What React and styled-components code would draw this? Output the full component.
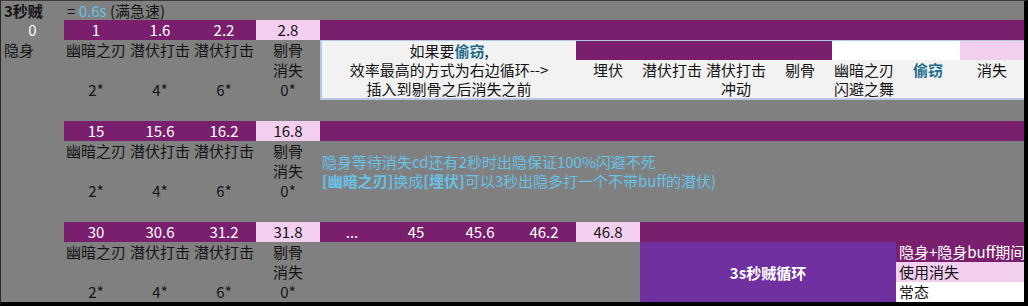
import React from "react";
import styled, { createGlobalStyle } from "styled-components";

const PURPLE = "#7a1f6e";
const PINK = "#f2ceef";
const VIOLET = "#7030a0";
const HINT = "#66c3ea";
const TEAL = "#1f6f8b";
const INK = "#141414";
const EDGE = "#b4c7e7";

const SKILLS = ["幽暗之刃", "潜伏打击", "潜伏打击", "剔骨"];
const STACKS = ["2*", "4*", "6*", "0*"];

const BLOCKS = [
  { row: 2, times: ["1", "1.6", "2.2", "2.8"], pink: [3] },
  { row: 7, times: ["15", "15.6", "16.2", "16.8"], pink: [3] },
  {
    row: 12,
    times: ["30", "30.6", "31.2", "31.8", "...", "45", "45.6", "46.2", "46.8"],
    pink: [3, 8],
  },
];

const GlobalStyle = createGlobalStyle`
  html, body {
    margin: 0;
    padding: 0;
    background: #808080;
  }
  body {
    font-family: "Noto Sans CJK SC", "Liberation Sans", sans-serif;
  }
`;

const Sheet = styled.div`
  width: 1028px;
  height: 306px;
  box-sizing: border-box;
  display: grid;
  grid-template-columns: 63px repeat(15, 64px);
  grid-template-rows: 19px repeat(4, 20px) 21px repeat(4, 20px) 21px repeat(4, 20px);
  border-top: 1px solid #3c3c3c;
  border-left: 1px solid #2a2a2a;
  border-right: 4px solid #000;
  border-bottom: 4px solid #000;
  background: #808080;
  font-size: 15px;
  color: ${INK};
  overflow: hidden;
`;

const Cell = styled.div`
  grid-column: ${(p) => p.$c} / span ${(p) => p.$w || 1};
  grid-row: ${(p) => p.$r} / span ${(p) => p.$h || 1};
  display: flex;
  align-items: center;
  justify-content: ${(p) => (p.$left ? "flex-start" : "center")};
  padding-left: ${(p) => (p.$left ? "3px" : "0")};
  line-height: 20px;
  white-space: nowrap;
  min-width: 0;
  color: ${(p) => p.$color || "inherit"};
`;

const Title = styled(Cell)`
  font-weight: 700;
`;

const Band = styled(Cell)`
  background: ${(p) => (p.$pink ? PINK : PURPLE)};
  color: ${(p) => (p.$pink ? INK : "#fff")};
`;

const Blue = styled.span`
  color: ${HINT};
  font-weight: ${(p) => (p.$bold ? 700 : 400)};
`;

const NoteBox = styled.div`
  grid-column: 6 / span 11;
  grid-row: 3 / span 3;
  display: grid;
  grid-template-columns: 254px repeat(7, 64px);
  grid-template-rows: 19px 20px 18px;
  background: #f2f2f2;
  border-top: 1px solid ${EDGE};
  border-left: 2px solid ${EDGE};
  border-bottom: 2px solid ${EDGE};
`;

const NoteText = styled.div`
  grid-column: 1;
  grid-row: 1 / span 3;
  display: flex;
  flex-direction: column;
  align-items: center;
  line-height: 19px;
  white-space: nowrap;
`;

const Key = styled.b`
  color: ${TEAL};
`;

const Swatch = styled.div`
  grid-column: ${(p) => p.$c} / span ${(p) => p.$w};
  grid-row: 1;
  background: ${(p) => p.$bg};
`;

const Hint = styled.div`
  grid-column: 6 / span 11;
  grid-row: 8 / span 3;
  padding: 11px 0 0 2px;
  line-height: 19px;
  color: ${HINT};
  white-space: nowrap;
`;

const Loop = styled.div`
  grid-column: 11 / span 4;
  grid-row: 13 / span 3;
  display: flex;
  align-items: center;
  justify-content: center;
  background: ${VIOLET};
  color: #fff;
  font-weight: 700;
`;

const Legend = styled(Cell)`
  background: ${(p) => ({ purple: PURPLE, pink: PINK, white: "#fff" })[p.$tone]};
  color: ${(p) => (p.$tone === "purple" ? "#fff" : INK)};
`;

const Block = ({ row, times, pink }) => (
  <>
    {times.map((t, i) => (
      <Band key={`t${i}`} $c={2 + i} $r={row} $pink={pink.includes(i)}>
        {t}
      </Band>
    ))}
    <Band $c={2 + times.length} $w={15 - times.length} $r={row} />
    {SKILLS.map((s, i) => (
      <Cell key={`s${i}`} $c={2 + i} $r={row + 1}>
        {s}
      </Cell>
    ))}
    <Cell $c={5} $r={row + 2}>
      消失
    </Cell>
    {STACKS.map((s, i) => (
      <Cell key={`k${i}`} $c={2 + i} $r={row + 3}>
        {s}
      </Cell>
    ))}
  </>
);

const App = () => {
  return (
    <>
      <GlobalStyle />
      <Sheet>
        <Title $c={1} $r={1} $left>
          3秒贼
        </Title>
        <Cell $c={2} $r={1} $w={4} $left>
          = <Blue>&nbsp;0.6s</Blue>&nbsp;(满急速)
        </Cell>
        <Cell $c={1} $r={2} $color="#fff">
          0
        </Cell>
        <Cell $c={1} $r={3} $left>
          隐身
        </Cell>

        {BLOCKS.map((b) => (
          <Block key={b.row} {...b} />
        ))}

        <NoteBox>
          <NoteText>
            <span>
              如果要<Key>偷窃</Key>,
            </span>
            <span>效率最高的方式为右边循环--&gt;</span>
            <span>插入到剔骨之后消失之前</span>
          </NoteText>
          <Swatch $c={2} $w={4} $bg={PURPLE} />
          <Swatch $c={6} $w={2} $bg="#fff" />
          <Swatch $c={8} $w={1} $bg={PINK} />
          <Cell $c={2} $r={2}>埋伏</Cell>
          <Cell $c={3} $r={2}>潜伏打击</Cell>
          <Cell $c={4} $r={2}>潜伏打击</Cell>
          <Cell $c={4} $r={3}>冲动</Cell>
          <Cell $c={5} $r={2}>剔骨</Cell>
          <Cell $c={6} $r={2}>幽暗之刃</Cell>
          <Cell $c={6} $r={3}>闪避之舞</Cell>
          <Cell $c={7} $r={2}>
            <Key>偷窃</Key>
          </Cell>
          <Cell $c={8} $r={2}>消失</Cell>
        </NoteBox>

        <Hint>
          <div>隐身等待消失cd还有2秒时出隐保证100%闪避不死</div>
          <div>
            <b>[幽暗之刃]</b>换成<b>[埋伏]</b>可以3秒出隐多打一个不带buff的潜伏)
          </div>
        </Hint>

        <Loop>3s秒贼循环</Loop>
        <Legend $c={15} $w={2} $r={13} $tone="purple" $left>
          隐身+隐身buff期间
        </Legend>
        <Legend $c={15} $w={2} $r={14} $tone="pink" $left>
          使用消失
        </Legend>
        <Legend $c={15} $w={2} $r={15} $tone="white" $left>
          常态
        </Legend>
      </Sheet>
    </>
  );
};

export default App;
